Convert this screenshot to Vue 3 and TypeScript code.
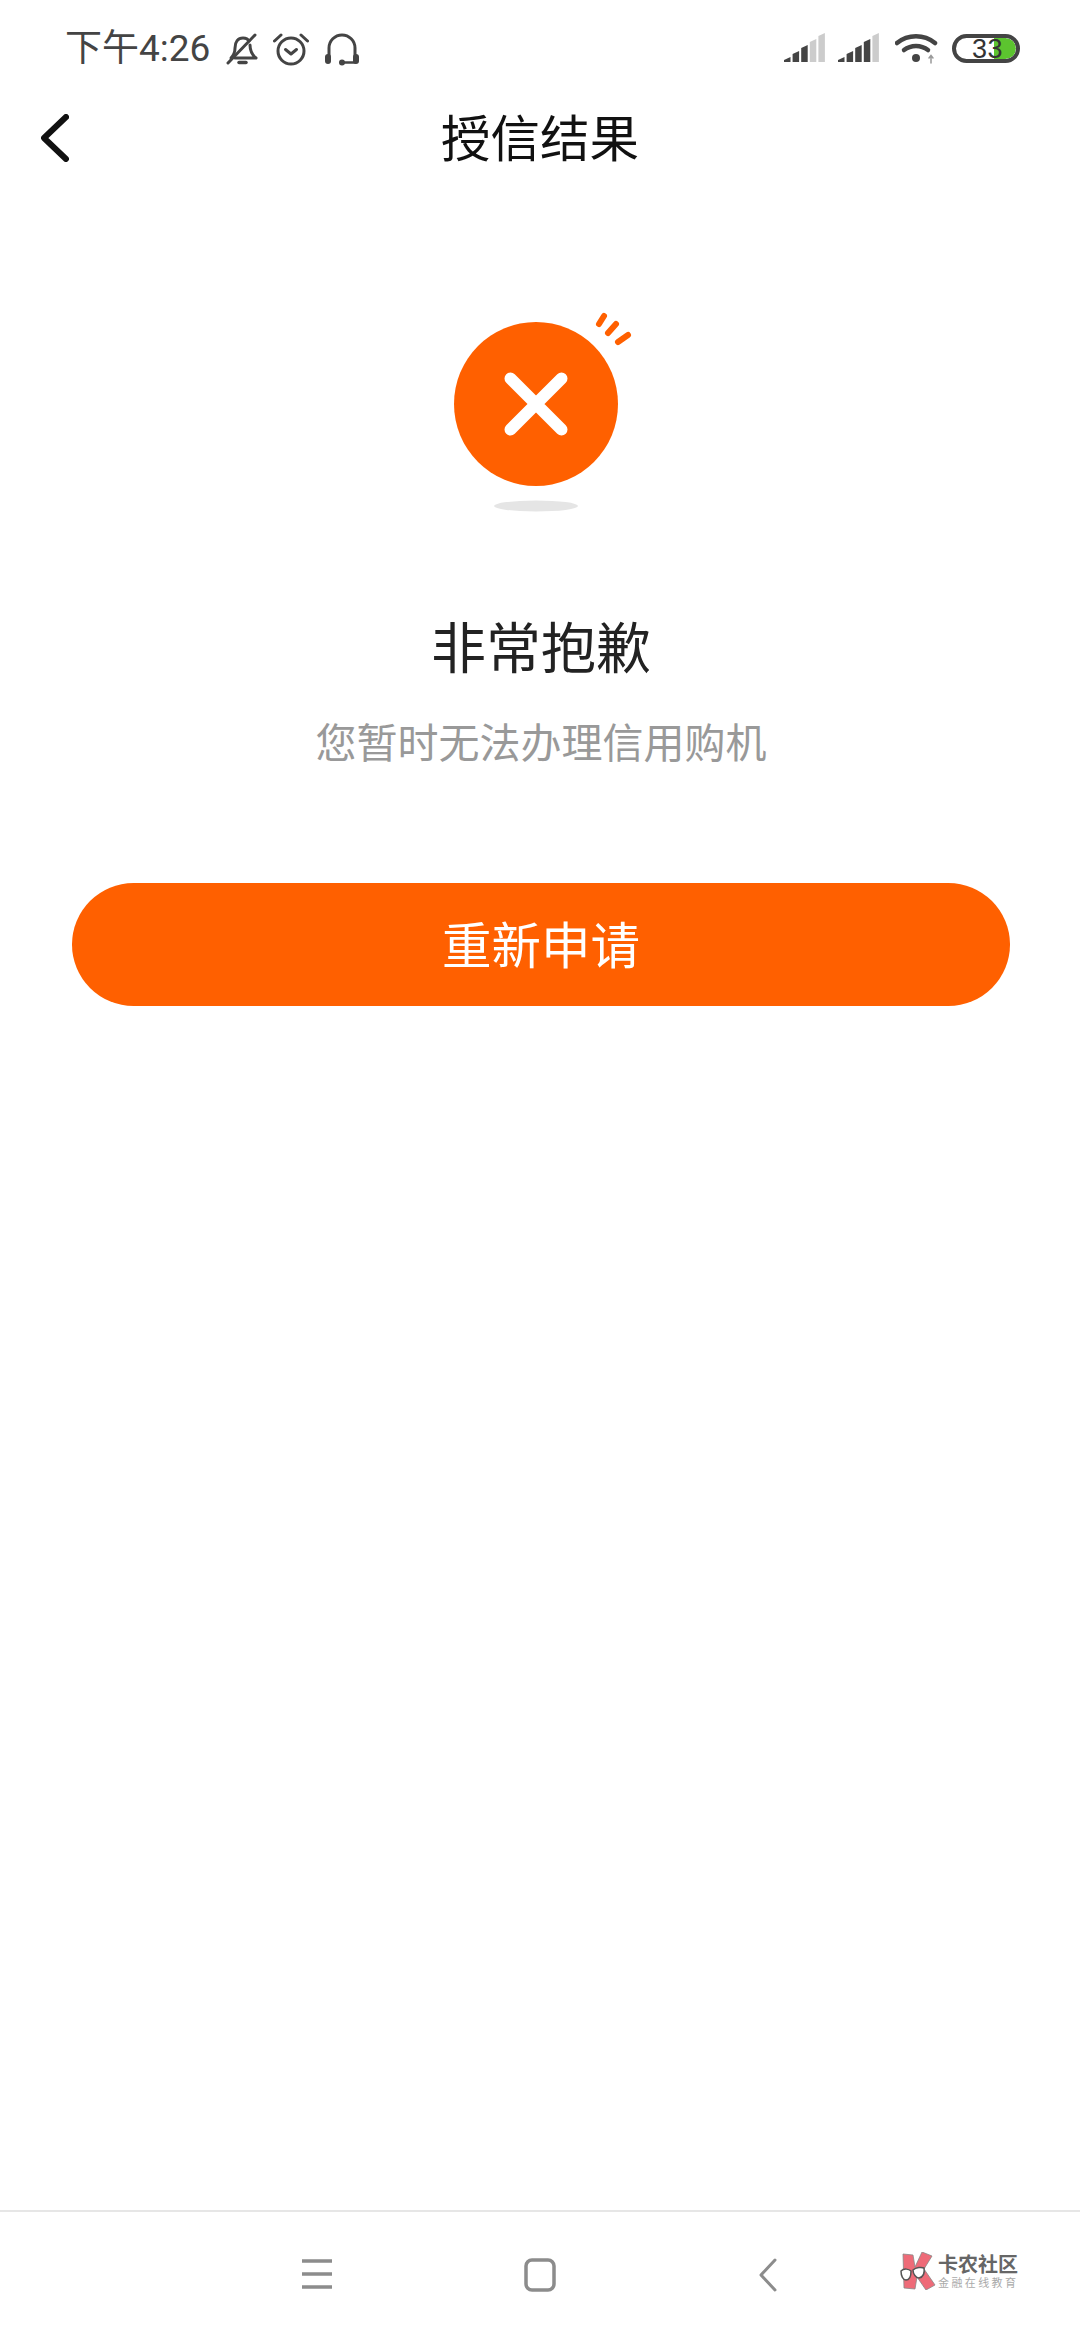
<script setup lang="ts">
const barHeights: number[] = [5, 11, 17, 23, 29]
function barPoints(i: number): string {
  const x = i * 8.6
  const h = barHeights[i]
  return `${x},29 ${x},${29 - h + 3} ${x + 6.500},${29 - h} ${x + 6.500},29`
}
</script>

<template>
  <div class="page">
    <header class="status">
      <div class="status-left">
        <span class="time">下午4:26</span>
        <svg class="ic bell" width="32" height="32" viewBox="0 0 32 32" fill="none" stroke="#444" stroke-width="3" stroke-linecap="round" stroke-linejoin="round">
          <path d="M5 25c3-3 4-5 4-10 0-6 3-10 8-10 3 0 5 1 6 3" />
          <path d="M24 12c0 5 1 9 6 13H9" />
          <path d="M2 30 29 2" />
          <path d="M13 29.500h7" stroke-width="3.500" />
        </svg>
        <svg class="ic alarm" width="36" height="33" viewBox="0 0 36 33" fill="none" stroke="#444" stroke-width="3" stroke-linecap="round" stroke-linejoin="round">
          <circle cx="18" cy="18" r="13" />
          <path d="M12.500 16.500 18 21l5.500-4.500" />
          <path d="M1.500 8 8 2M34.500 8 28 2" />
        </svg>
        <svg class="ic" width="36" height="33" viewBox="0 0 36 33" fill="none" stroke="#444" stroke-width="3" stroke-linecap="round">
          <path d="M5 24V15a13 13 0 0 1 26 0v9" />
          <rect x="1" y="21" width="6" height="10" rx="3" fill="#444" stroke="none" />
          <rect x="29" y="21" width="6" height="10" rx="3" fill="#444" stroke="none" />
          <path d="M18 29.500h13" stroke-width="2.500" />
          <circle cx="18" cy="29.500" r="3" fill="#444" stroke="none" />
        </svg>
      </div>
      <div class="status-right">
        <svg v-for="n in 2" :key="n" class="signal" width="41" height="31" viewBox="0 0 41 31">
          <polygon v-for="(_, i) in barHeights" :key="i" :points="barPoints(i)" :fill="i >= (n === 1 ? 3 : 4) ? '#ccc' : '#444'" />
        </svg>
        <svg class="wifi" width="44" height="31" viewBox="0 0 44 31" fill="none" stroke="#444" stroke-width="4.500" stroke-linecap="round">
          <path d="M2 10c11-9 27-9 38 0" />
          <path d="M9 17c7-5.500 17-5.500 24 0" />
          <circle cx="21" cy="25" r="4" fill="#444" stroke="none" />
          <path d="M36 30v-7M34 25l2-2.500 2 2.500" stroke="#999" stroke-width="1.500" />
        </svg>
        <div class="battery">
          <span class="fill"></span>
          <span class="level">33</span>
        </div>
      </div>
    </header>

    <nav class="nav">
      <svg class="back" width="28" height="48" viewBox="0 0 28 48" fill="none" stroke="#111" stroke-width="6" stroke-linecap="round" stroke-linejoin="round">
        <path d="M25 3 3 24l22 21" />
      </svg>
      <h1 class="nav-title">授信结果</h1>
    </nav>

    <main class="content">
      <svg class="hero" width="200" height="220" viewBox="0 0 200 220" fill="none">
        <circle cx="95" cy="104" r="82" fill="#ff6000" />
        <g stroke="#fff" stroke-width="12" stroke-linecap="round">
          <path d="M69.500 78.500l51 51M120.500 78.500l-51 51" />
        </g>
        <g stroke="#ff6000" stroke-width="6" stroke-linecap="round">
          <path d="M158 24l5-8M167 33l8-9M177 42l10-7" />
        </g>
        <ellipse cx="95" cy="206" rx="42" ry="5.500" fill="#e5e5e5" />
      </svg>
      <h2 class="title">非常抱歉</h2>
      <p class="sub">您暂时无法办理信用购机</p>
      <button class="cta" type="button">重新申请</button>
    </main>

    <footer class="softkeys">
      <svg width="32" height="32" viewBox="0 0 32 32" stroke="#8c8c8c" stroke-width="3.500">
        <path d="M1 3h30M1 16h30M1 29h30" />
      </svg>
      <svg width="32" height="34" viewBox="0 0 32 34" fill="none" stroke="#8c8c8c" stroke-width="3.500">
        <rect x="2" y="2" width="28" height="30" rx="6" />
      </svg>
      <svg class="key-back" width="20" height="34" viewBox="0 0 20 34" fill="none" stroke="#8c8c8c" stroke-width="3" stroke-linecap="round" stroke-linejoin="round">
        <path d="M17 2 3 17l14 15" />
      </svg>
      <div class="mark">
        <svg width="37" height="38" viewBox="0 0 37 38">
          <path d="M3 2l10 1 2 12 7-15 10 4-8 13 11 16-9 5-9-13-2 12-11-1z" fill="#ee6b78" stroke="#888" stroke-width="0.800" />
          <path d="M1 19c3-3 8-2 10 0 0 6-2 9-5 9s-5-4-5-9z" fill="#fff" stroke="#555" stroke-width="1.500" />
          <path d="M13 18c3-3 9-3 11-2 1 6-1 9-5 10-3 0-6-4-6-8z" fill="#fff" stroke="#555" stroke-width="1.500" />
        </svg>
        <div class="mark-text">
          <span class="mark-name">卡农社区</span>
          <span class="mark-tag">金融在线教育</span>
        </div>
      </div>
    </footer>
  </div>
</template>

<style scoped>
.page {
  position: relative;
  width: 1080px;
  height: 2340px;
  background: #fff;
  display: flex;
  flex-direction: column;
  font-family: "Noto Sans CJK SC", "Noto Sans", sans-serif;
  overflow: hidden;
}

.status {
  height: 92px;
  flex: none;
  display: flex;
  justify-content: space-between;
  align-items: center;
  padding: 4px 60px 0 65px;
  box-sizing: border-box;
}
.status-left,
.status-right {
  display: flex;
  align-items: center;
}
.status-left {
  margin-top: 2px;
}
.time {
  font-family: Roboto, "Noto Sans CJK SC", sans-serif;
  font-size: 37px;
  line-height: 40px;
  color: #444;
  width: 161px;
  white-space: nowrap;
}
.ic {
  display: block;
  margin-right: 15px;
}
.status-right {
  gap: 13px;
}
.signal {
  display: block;
}
.wifi {
  display: block;
  margin: 0 0 0 3px;
}
.battery {
  position: relative;
  width: 68px;
  height: 29px;
  border: 4px solid #444;
  border-radius: 15px;
  box-sizing: border-box;
  overflow: hidden;
}
.fill {
  position: absolute;
  top: 0;
  bottom: 0;
  right: 0;
  width: 22px;
  background: #5cc42f;
  border-radius: 0 11px 11px 0;
}
.level {
  position: absolute;
  left: 16px;
  top: -3px;
  font-family: "Liberation Sans", sans-serif;
  font-size: 27px;
  line-height: 29px;
  color: #333;
  letter-spacing: 0.5px;
}

.nav {
  position: relative;
  height: 92px;
  flex: none;
  display: flex;
  align-items: center;
  justify-content: center;
}
.back {
  position: absolute;
  left: 41px;
  top: 22px;
}
.nav-title {
  margin: -4px 0 0;
  font-size: 49.500px;
  line-height: 92px;
  font-weight: 400;
  color: #111;
}

.content {
  flex: 1;
  display: flex;
  flex-direction: column;
  align-items: center;
  padding: 116px 70px 0 72px;
}
.hero {
  display: block;
  margin-bottom: 84px;
  flex: none;
}
.title {
  margin: 0;
  font-size: 55px;
  line-height: 80px;
  font-weight: 400;
  color: #222;
}
.sub {
  margin: 28px 0 0;
  font-size: 41px;
  line-height: 56px;
  color: #999;
}
.cta {
  margin-top: 115px;
  width: 100%;
  height: 123px;
  border: 0;
  border-radius: 62px;
  background: #ff6000;
  color: #fff;
  font-family: inherit;
  font-size: 49.500px;
  padding: 0 0 5px;
}

.softkeys {
  position: relative;
  height: 130px;
  flex: none;
  border-top: 2px solid #e6e6e6;
  box-sizing: border-box;
  display: flex;
  align-items: flex-start;
  gap: 191px;
  padding: 46px 0 0 301px;
}
.softkeys > svg {
  display: block;
  flex: none;
}
.softkeys > .key-back {
  margin-left: 11px;
}
.mark {
  position: absolute;
  left: 900px;
  top: 40px;
  display: flex;
  gap: 1px;
  align-items: center;
}
.mark-text {
  display: flex;
  flex-direction: column;
  white-space: nowrap;
}
.mark-name {
  font-size: 20px;
  line-height: 22px;
  font-weight: 700;
  color: #666;
}
.mark-tag {
  font-size: 11px;
  line-height: 14px;
  color: #aaa;
  letter-spacing: 2.400px;
}
</style>
